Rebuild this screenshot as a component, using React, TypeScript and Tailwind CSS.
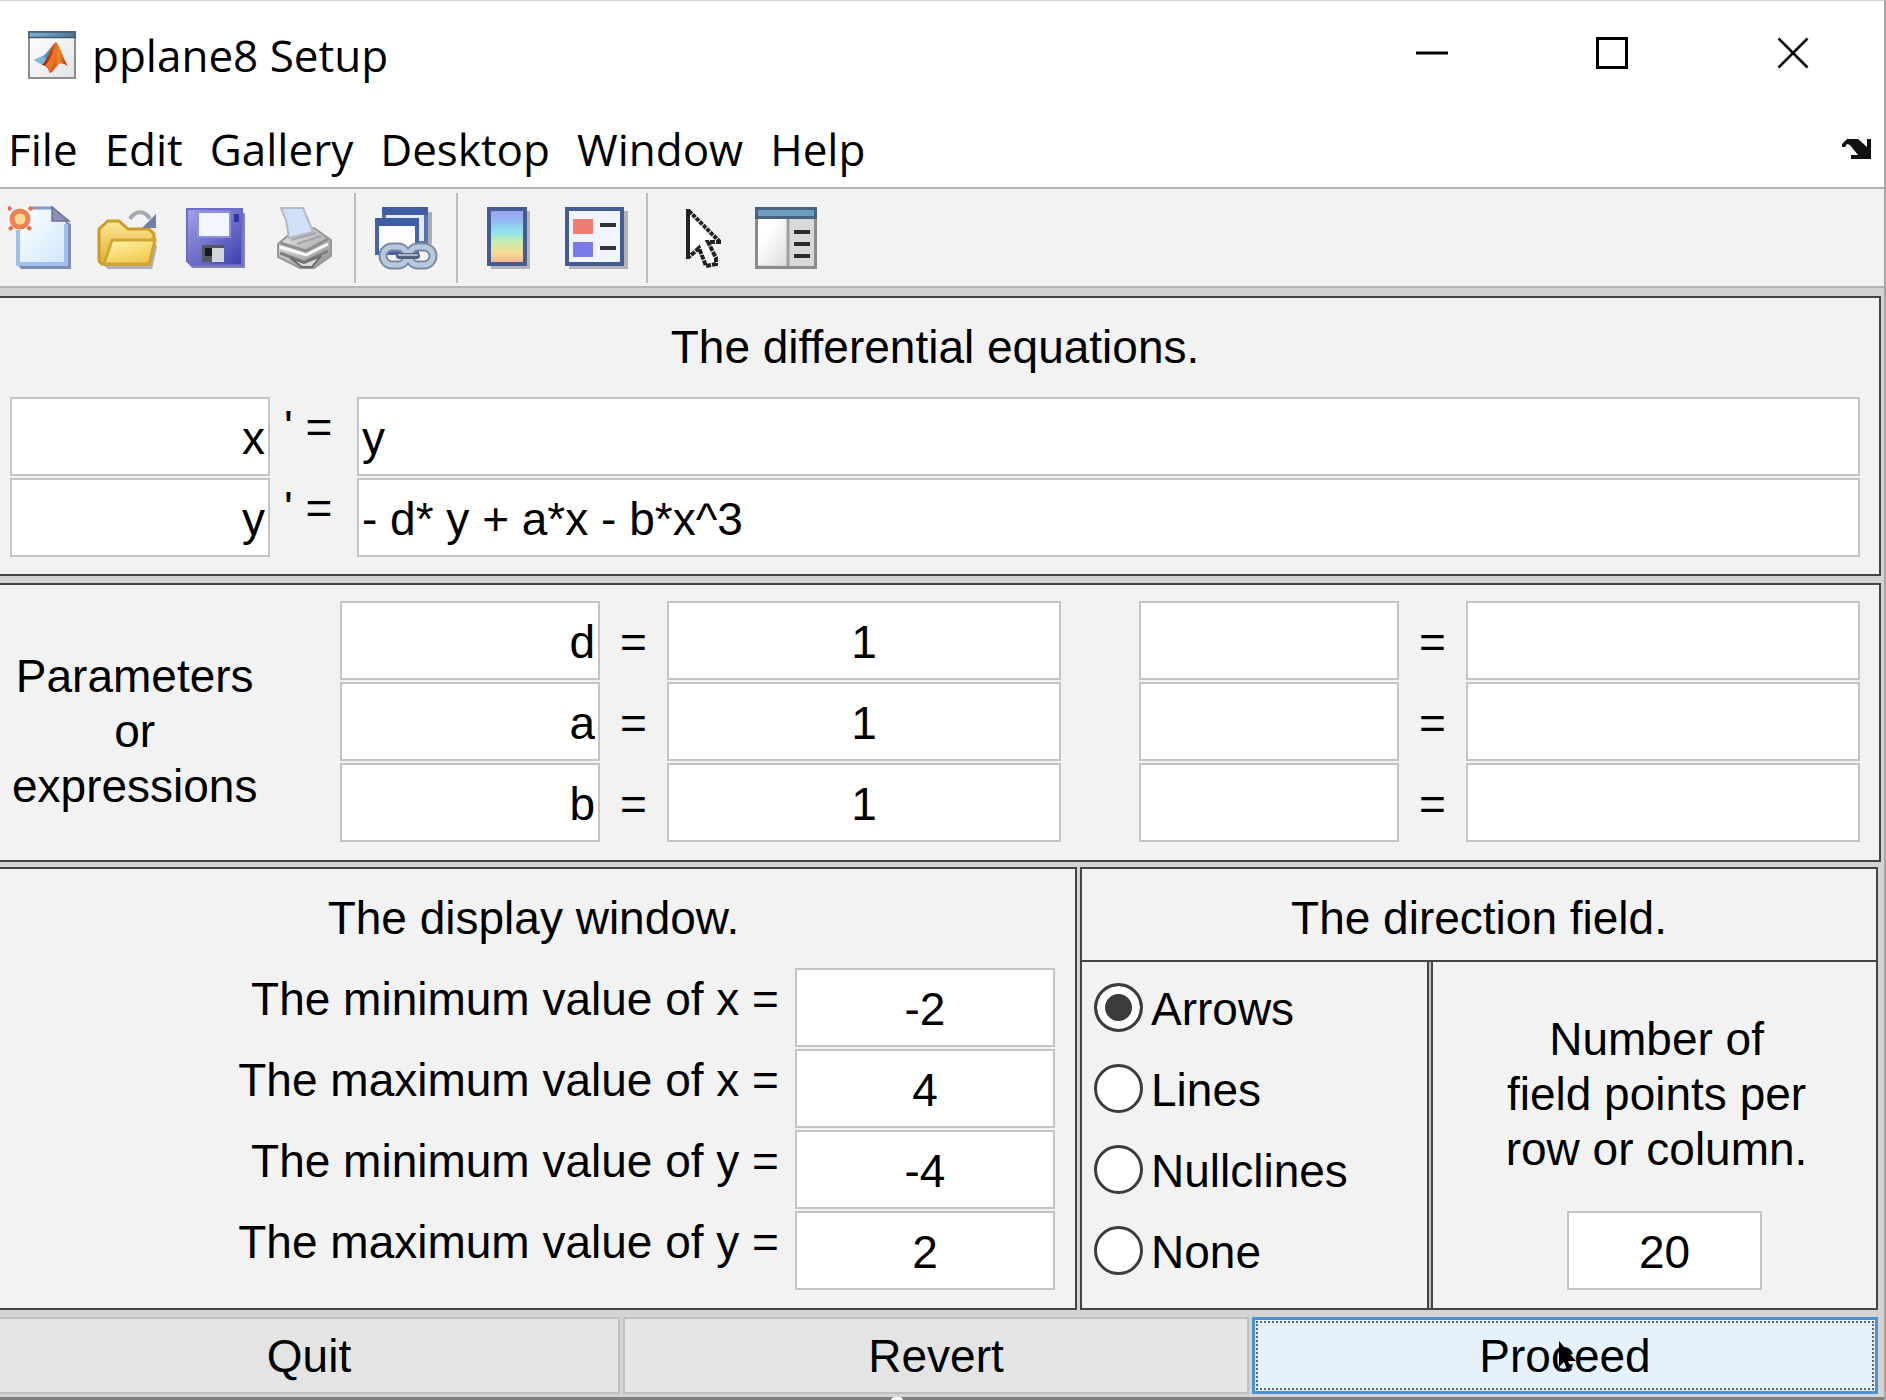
import React from 'react';

const field =
  'block h-[79px] w-full min-w-0 rounded-none border-2 border-[#c4c4c4] bg-white px-[3px] pt-[3px] text-[46px] text-black outline-none';

function Field({ label, value, align }: { label: string; value: string; align: 'left' | 'right' | 'center' }) {
  const side = align === 'left' ? 'text-left' : align === 'right' ? 'text-right' : 'text-center';
  return <input type="text" aria-label={label} defaultValue={value} className={`${field} ${side}`} />;
}

function MatlabIcon() {
  return (
    <svg width="48" height="48" viewBox="0 0 48 48" aria-hidden="true">
      <defs>
        <linearGradient id="mlBg" x1="0" y1="0" x2="1" y2="1">
          <stop offset="0" stopColor="#fff" />
          <stop offset="1" stopColor="#e2e3e6" />
        </linearGradient>
        <linearGradient id="mlBar" x1="0" y1="0" x2="1" y2="0">
          <stop offset="0" stopColor="#82b3d3" />
          <stop offset="1" stopColor="#46799f" />
        </linearGradient>
        <linearGradient id="mlPeak" x1="0" y1="0" x2="1" y2="0">
          <stop offset="0" stopColor="#7a1f12" />
          <stop offset="0.4" stopColor="#d9481a" />
          <stop offset="0.65" stopColor="#f08a2c" />
          <stop offset="1" stopColor="#a82a12" />
        </linearGradient>
      </defs>
      <rect x="1" y="1" width="46" height="46" fill="url(#mlBg)" stroke="#8b8d90" strokeWidth="2" />
      <rect x="1" y="1" width="46" height="5.5" fill="url(#mlBar)" stroke="#47586a" strokeWidth="1.5" />
      <path d="M6 29 L15 25 C18 24 23 15 27 12 L22 30 L17 35 Z" fill="#4b93c4" />
      <path d="M6 29 L15 25 L19 29 L14 34 Z" fill="#7db8dc" />
      <path d="M14 34 C19 31 23 14 28 11 C32 14 35 28 40 35 C36 33 33 31 30 34 C27 37 25 41 22 42 C20 37 18 34 14 34 Z" fill="url(#mlPeak)" />
      <path d="M28 13 C29 22 27 32 22 42 C21 38 19 36 17 34 C22 30 25 22 28 13 Z" fill="#ee7424" />
    </svg>
  );
}

function NewIcon() {
  return (
    <svg width="64" height="64" viewBox="0 0 64 64" aria-hidden="true">
      <defs>
        <linearGradient id="page" x1="0" y1="0" x2="1" y2="1">
          <stop offset="0" stopColor="#fff" />
          <stop offset="1" stopColor="#cfe6fb" />
        </linearGradient>
      </defs>
      <path d="M9 58 L13 63 H63 V18 L56 14 V58 Z" fill="#7f8db0" />
      <path d="M10 2 H46 L58 17 V58 H10 Z" fill="url(#page)" />
      <path d="M10 24 V58 H58 V18" fill="none" stroke="#9dc0ee" strokeWidth="4" />
      <path d="M24 2 H46" stroke="#7f9ad6" strokeWidth="3" />
      <path d="M44 1 V15 H61 Z" fill="#8c90b8" stroke="#6c7298" strokeWidth="1.5" />
      <g stroke="#e96b49" strokeWidth="4" strokeDasharray="4 3">
        <path d="M0 1 L24 25 M24 1 L0 25" />
      </g>
      <circle cx="12" cy="13" r="8" fill="#fbdc9a" stroke="#ee8252" strokeWidth="5" />
    </svg>
  );
}

function OpenIcon() {
  return (
    <svg width="62" height="62" viewBox="0 0 62 62" aria-hidden="true">
      <defs>
        <linearGradient id="folder" x1="0" y1="0" x2="0.6" y2="1">
          <stop offset="0" stopColor="#fff6b0" />
          <stop offset="1" stopColor="#f3c94c" />
        </linearGradient>
        <linearGradient id="folderBack" x1="0" y1="0" x2="0" y2="1">
          <stop offset="0" stopColor="#fbe89a" />
          <stop offset="1" stopColor="#e5ad2c" />
        </linearGradient>
      </defs>
      <path d="M6 58 L11 62 H55 L60 40 L58 34 Z" fill="#b1b1b1" />
      <path d="M2 22 L11 14 H22 L31 22 H52 L57 27 V34 L52 57 H5 L2 54 Z" fill="url(#folderBack)" stroke="#cb9a28" strokeWidth="3" />
      <path d="M15 33 H58 L52 57 H7 Z" fill="url(#folder)" stroke="#d2a431" strokeWidth="3" />
      <path d="M33 12 C38 3 48 3 53 12" fill="none" stroke="#a3a9b5" strokeWidth="4" />
      <path d="M59 7 V21 H45 Z" fill="#6f7fa5" />
    </svg>
  );
}

function SaveIcon() {
  return (
    <svg width="60" height="60" viewBox="0 0 60 60" aria-hidden="true">
      <defs>
        <linearGradient id="disk" x1="0" y1="0" x2="1" y2="1">
          <stop offset="0" stopColor="#a3a2ea" />
          <stop offset="1" stopColor="#3c3fae" />
        </linearGradient>
      </defs>
      <path d="M4 57 H56 V3 L59 6 V60 H6 Z" fill="#8286a8" />
      <path d="M1 1 H56 V57 H5 L1 53 Z" fill="url(#disk)" stroke="#6b6ccd" strokeWidth="2" />
      <rect x="12" y="4" width="32" height="25" fill="#f4f6ff" stroke="#8d90dd" strokeWidth="2" />
      <rect x="48" y="6" width="5" height="8" fill="#3034a0" />
      <rect x="16" y="37" width="22" height="17" fill="#55585e" />
      <rect x="26" y="40" width="12" height="14" fill="#d2d5dc" />
      <rect x="19" y="40" width="7" height="8" fill="#16181c" />
    </svg>
  );
}

function PrintIcon() {
  return (
    <svg width="56" height="64" viewBox="0 0 56 64" aria-hidden="true">
      <defs>
        <linearGradient id="printer" x1="0" y1="0" x2="1" y2="1">
          <stop offset="0" stopColor="#ededed" />
          <stop offset="1" stopColor="#8f8f8f" />
        </linearGradient>
      </defs>
      <path d="M2 38 L14 28 L38 22 L55 34 V50 L38 62 H24 L2 51 Z" fill="url(#printer)" stroke="#979797" strokeWidth="2" />
      <path d="M5 2 H27 L37 26 L13 32 L10 14 Z" fill="#cfe0f8" stroke="#b3b9c4" strokeWidth="2" />
      <path d="M4 37 L30 45 L52 33" fill="none" stroke="#8e8e8e" strokeWidth="3" />
      <path d="M4 41 L30 49 L52 38" fill="none" stroke="#f8f8f8" strokeWidth="3" />
      <path d="M15 34 L40 27 M21 38 L45 30" stroke="#a5a5a5" strokeWidth="2" />
      <path d="M4 47 L28 56 L52 45" fill="none" stroke="#7e7e7e" strokeWidth="3" />
      <path d="M14 52 L28 57 L45 50 L36 61 H26 Z" fill="#dadada" stroke="#6f6f6f" strokeWidth="2" />
    </svg>
  );
}

function LinkIcon() {
  return (
    <svg width="64" height="64" viewBox="0 0 64 64" aria-hidden="true">
      <path d="M54 6 V38 H58 V6 Z" fill="#a9adb8" />
      <rect x="10" y="3" width="42" height="34" fill="#dfeafa" stroke="#5871ae" strokeWidth="4" />
      <rect x="8" y="1" width="46" height="8" fill="#3f5da3" />
      <rect x="3" y="15" width="40" height="32" fill="#fdfdff" stroke="#4764a8" strokeWidth="4" />
      <rect x="1" y="12" width="44" height="8" fill="#3f5da3" />
      <g fill="none" strokeLinecap="round">
        <rect x="9" y="41" width="24" height="18" rx="9" stroke="#7888a0" strokeWidth="9" />
        <rect x="35" y="41" width="24" height="18" rx="9" stroke="#7888a0" strokeWidth="9" />
        <rect x="9" y="41" width="24" height="18" rx="9" stroke="#b9c9dd" strokeWidth="5" />
        <rect x="35" y="41" width="24" height="18" rx="9" stroke="#b9c9dd" strokeWidth="5" />
        <path d="M25 50 H43" stroke="#53627a" strokeWidth="6" />
        <path d="M25 49 H43" stroke="#a9bbd2" strokeWidth="2" />
      </g>
    </svg>
  );
}

function ColorbarIcon() {
  return (
    <svg width="43" height="62" viewBox="0 0 43 62" aria-hidden="true">
      <defs>
        <linearGradient id="rainbow" x1="0" y1="0" x2="0" y2="1">
          <stop offset="0" stopColor="#a49cf0" />
          <stop offset="0.2" stopColor="#93b6f2" />
          <stop offset="0.42" stopColor="#8fe3ea" />
          <stop offset="0.6" stopColor="#c9ecb0" />
          <stop offset="0.8" stopColor="#f6dc90" />
          <stop offset="1" stopColor="#f6aa94" />
        </linearGradient>
      </defs>
      <rect x="4" y="4" width="39" height="58" fill="#b3b4ba" />
      <rect x="2" y="2" width="36" height="55" fill="url(#rainbow)" stroke="#445c94" strokeWidth="4" />
    </svg>
  );
}

function LegendIcon() {
  return (
    <svg width="63" height="62" viewBox="0 0 63 62" aria-hidden="true">
      <rect x="4" y="4" width="59" height="58" fill="#b3b4ba" />
      <rect x="2" y="2" width="55" height="55" fill="#f0f4ff" stroke="#445c94" strokeWidth="4" />
      <rect x="8" y="12" width="20" height="15" fill="#f27b74" />
      <rect x="8" y="35" width="20" height="15" fill="#7b7aea" />
      <path d="M35 18 H51 M35 41 H51" stroke="#333" strokeWidth="4" />
    </svg>
  );
}

function ArrowIcon() {
  return (
    <svg width="48" height="60" viewBox="-12 0 48 60" aria-hidden="true">
      <path d="M2 3 V50 L13 40 L21 57 L28 54 L22 36 H34 Z" fill="#fff" />
      <path d="M2 1 V51" stroke="#222" strokeWidth="4" />
      <path d="M3 3 L34 34" stroke="#222" strokeWidth="4" strokeDasharray="4 1" />
      <path d="M35 34 H22 L30 50 V56 L20 58 L13 40 L3 49" fill="none" stroke="#222" strokeWidth="4" strokeDasharray="5 1" />
    </svg>
  );
}

function PlotToolsIcon() {
  return (
    <svg width="62" height="62" viewBox="0 0 62 62" aria-hidden="true">
      <defs>
        <linearGradient id="pane" x1="0" y1="0" x2="1" y2="1">
          <stop offset="0.3" stopColor="#fff" />
          <stop offset="1" stopColor="#dcdcdc" />
        </linearGradient>
      </defs>
      <rect x="1.5" y="1.5" width="59" height="59" fill="#d9d9d9" stroke="#8b8b8b" strokeWidth="3" />
      <rect x="3" y="12" width="29" height="46" fill="url(#pane)" />
      <path d="M33 11 V59" stroke="#9f9f9f" strokeWidth="3" />
      <rect x="1.5" y="1.5" width="59" height="9" fill="#6e9dc0" stroke="#46647f" strokeWidth="3" />
      <path d="M39 25 H55 M39 37 H55 M39 49 H55" stroke="#2b2b2b" strokeWidth="4" />
    </svg>
  );
}

function ToolButton({ label, children }: { label: string; children: React.ReactNode }) {
  return (
    <button type="button" aria-label={label} className="flex h-16 w-[88px] shrink-0 items-center justify-center">
      {children}
    </button>
  );
}

function Separator() {
  return <div className="mx-[6px] h-[90px] w-[2px] shrink-0 bg-[#bdbdbd]" />;
}

const menus = ['File', 'Edit', 'Gallery', 'Desktop', 'Window', 'Help'];

const panel = 'border-2 border-[#444444] bg-[#f2f2f2]';

export default function App() {
  const [mode, setMode] = React.useState('Arrows');
  return (
    <div className="w-full overflow-x-hidden border-t border-r-2 border-t-[#cfcfcf] border-r-[#a6a6a6] bg-[#d4d4d4] font-['Liberation_Sans',Arial,sans-serif] text-[46px] leading-[55px] text-black">
      <header className="bg-white font-['Open_Sans','Noto_Sans',sans-serif] text-[44px]">
        <div className="flex h-[108px] items-center justify-between pl-7">
          <div className="flex items-center gap-4">
            <MatlabIcon />
            <h1>pplane8 Setup</h1>
          </div>
          <div className="flex pb-1">
            <button type="button" aria-label="Minimize" className="flex w-[180px] items-center justify-center">
              <svg width="32" height="32" viewBox="0 0 32 32"><path d="M0 16 H32" stroke="#000" strokeWidth="3" /></svg>
            </button>
            <button type="button" aria-label="Maximize" className="flex w-[180px] items-center justify-center">
              <svg width="32" height="32" viewBox="0 0 32 32"><rect x="1.5" y="1.5" width="29" height="29" fill="none" stroke="#000" strokeWidth="3" /></svg>
            </button>
            <button type="button" aria-label="Close" className="flex w-[182px] items-center justify-center">
              <svg width="32" height="32" viewBox="0 0 32 32"><path d="M1.5 1.5 L30.5 30.5 M30.5 1.5 L1.5 30.5" stroke="#000" strokeWidth="2.6" /></svg>
            </button>
          </div>
        </div>
        <nav className="flex h-[78px] items-center justify-between pt-[2px] pr-3 pl-2">
          <div className="flex gap-[27px]">
            {menus.map((m) => (
              <button key={m} type="button">{m}</button>
            ))}
          </div>
          <button type="button" aria-label="Dock window">
            <svg width="30" height="22" viewBox="0 0 30 22">
              <path d="M0 6 L5 1 H16 L25 9 V1 H29 V21 H9 V17 H16 L8 7 L5 6 L3 9 H0 Z" fill="#111" />
            </svg>
          </button>
        </nav>
      </header>

      <div role="toolbar" aria-label="Figure tools" className="flex h-[101px] items-center border-y-2 border-[#b4b4b4] bg-[#f2f2f2]">
        <div className="-ml-1 flex">
          <ToolButton label="New"><NewIcon /></ToolButton>
          <ToolButton label="Open"><OpenIcon /></ToolButton>
          <ToolButton label="Save"><SaveIcon /></ToolButton>
          <ToolButton label="Print"><PrintIcon /></ToolButton>
        </div>
        <Separator />
        <ToolButton label="Link plot"><LinkIcon /></ToolButton>
        <Separator />
        <ToolButton label="Insert colorbar"><ColorbarIcon /></ToolButton>
        <ToolButton label="Insert legend"><LegendIcon /></ToolButton>
        <Separator />
        <ToolButton label="Edit plot"><ArrowIcon /></ToolButton>
        <ToolButton label="Show plot tools"><PlotToolsIcon /></ToolButton>
      </div>

      <main className="flex flex-col pt-2 pr-[3px]">
        <section className={`${panel} border-l-0 pr-[19px] pb-[17px] pl-[10px]`}>
          <h2 className="py-[22px] text-center">The differential equations.</h2>
          <div className="flex flex-col gap-[2px]">
            {[['x', 'y'], ['y', '- d* y + a*x - b*x^3']].map(([v, eq]) => (
              <div key={v} className="grid grid-cols-[260fr_87fr_1503fr] leading-[60px]">
                <Field label={`Variable ${v}`} value={v} align="right" />
                <span className="pl-[14px] whitespace-pre">' =</span>
                <Field label={`Derivative of ${v}`} value={eq} align="left" />
              </div>
            ))}
          </div>
        </section>

        <section className={`${panel} mt-[7px] grid grid-cols-[340fr_1520fr] border-l-0 pt-4 pr-[19px] pb-[18px]`}>
          <h2 className="flex items-center justify-start pt-5 pl-3">
            <span className="text-center">Parameters<br />or<br />expressions</span>
          </h2>
          <div className="flex flex-col gap-[2px]">
            {['d', 'a', 'b'].map((p, i) => (
              <div key={p} className="grid h-[79px] grid-cols-[260fr_67fr_394fr_78fr_260fr_67fr_394fr] leading-[83px]">
                <Field label={`Parameter ${i + 1} name`} value={p} align="right" />
                <span className="text-center">=</span>
                <Field label={`Parameter ${i + 1} value`} value="1" align="center" />
                <span />
                <Field label={`Parameter ${i + 4} name`} value="" align="right" />
                <span className="text-center">=</span>
                <Field label={`Parameter ${i + 4} value`} value="" align="center" />
              </div>
            ))}
          </div>
        </section>

        <div className="mt-[5px] grid grid-cols-[1077fr_798fr] gap-[3px] pr-[3px]">
          <section className={`${panel} border-l-0 pb-4`}>
            <h2 className="py-[22px] pr-2 text-center">The display window.</h2>
            <div className="flex flex-col gap-[2px] pr-5">
              {[['minimum', 'x', '-2'], ['maximum', 'x', '4'], ['minimum', 'y', '-4'], ['maximum', 'y', '2']].map(([k, v, n]) => (
                <label key={k + v} className="flex justify-end gap-4 leading-[63px]">
                  <span>The {k} value of {v} =</span>
                  <span className="w-[260px]"><Field label={`The ${k} value of ${v}`} value={n} align="center" /></span>
                </label>
              ))}
            </div>
          </section>

          <section className={`${panel} flex flex-col`}>
            <h2 className="pt-[22px] pb-[14px] text-center">The direction field.</h2>
            <div className="grid flex-1 grid-cols-[348fr_446fr] gap-[2px] border-t-2 border-[#444444] bg-[#c4c4c4]">
              <div role="radiogroup" aria-label="Direction field style" className="flex flex-col gap-[2px] border-r-2 border-[#444444] bg-[#f2f2f2] pt-[6px] pl-3">
                {['Arrows', 'Lines', 'Nullclines', 'None'].map((m) => (
                  <label key={m} className="flex h-[79px] items-center gap-2">
                    <input
                      type="radio"
                      name="mode"
                      checked={mode === m}
                      onChange={() => setMode(m)}
                      className="size-[49px] shrink-0 appearance-none rounded-full border-[3px] border-[#3c3c3c] bg-white checked:bg-[#3c3c3c] checked:shadow-[inset_0_0_0_8px_white]"
                    />
                    <span className="pt-1">{m}</span>
                  </label>
                ))}
              </div>
              <div className="flex flex-col items-center gap-[34px] border-l-2 border-[#444444] bg-[#f2f2f2] pt-[50px] pb-[18px] pl-1">
                <label htmlFor="points" className="text-center">Number of<br />field points per<br />row or column.</label>
                <input id="points" type="text" defaultValue="20" className={`${field} ml-4 max-w-[195px] text-center`} />
              </div>
            </div>
          </section>
        </div>

        <div className="mt-[7px] grid grid-cols-[620fr_626fr_626fr] gap-[3px] pr-[3px] pb-[3px]">
          <button type="button" className="h-[77px] border-2 border-l-0 border-[#c0c0c0] bg-[#e4e4e4] pt-[2px]">Quit</button>
          <button type="button" className="h-[77px] border-2 border-[#c0c0c0] bg-[#e4e4e4] pt-[2px]">Revert</button>
          <button type="button" className="relative h-[77px] border-[3px] border-[#4a92d2] bg-[#e5f1fb] pt-[2px] outline-2 -outline-offset-6 outline-dotted outline-[#5a6470]">
            Proceed
            <svg className="absolute top-[21px] left-[49%]" width="18" height="32" viewBox="0 0 18 32" aria-hidden="true">
              <path d="M0 0 V26 L5 21 L9 31 L13 29 L9 20 H17 Z" fill="#000" />
            </svg>
          </button>
        </div>
      </main>
      <div className="flex h-1 justify-center bg-[#808080] pr-[90px]">
        <div className="h-1 w-3 rounded-t-full bg-white" />
      </div>
    </div>
  );
}
